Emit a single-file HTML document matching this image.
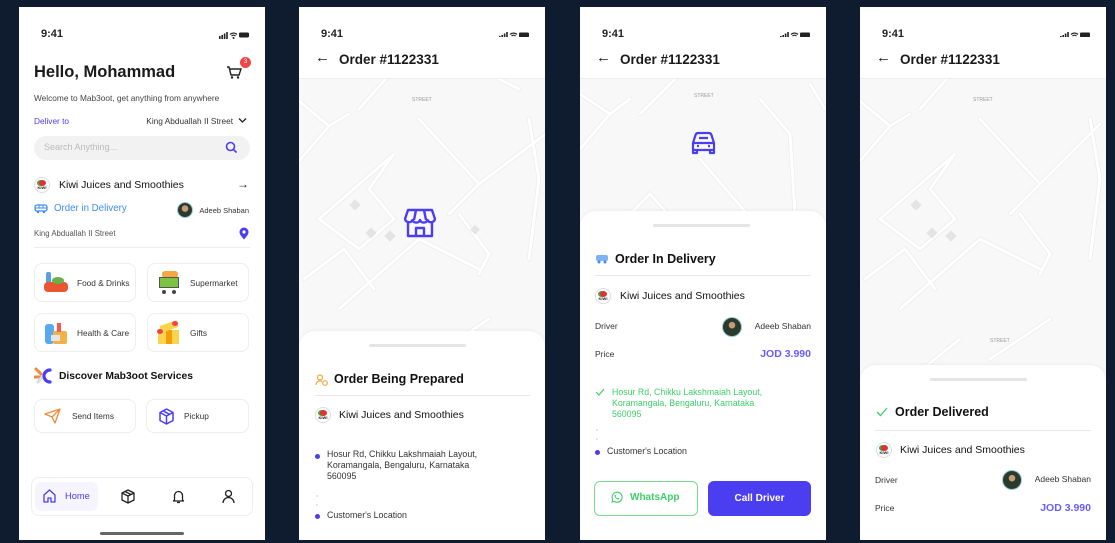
<!DOCTYPE html>
<html><head><meta charset="utf-8">
<style>
*{margin:0;padding:0;box-sizing:border-box}
body{width:1115px;height:543px;background:#0f1c2f;font-family:"Liberation Sans",sans-serif;color:#1a1a1a;position:relative;overflow:hidden}
.ph{position:absolute;top:7px;width:246px;height:533px;background:#fff;overflow:hidden}
.a{position:absolute;white-space:nowrap}
.sb{position:absolute;top:21px;left:22px;font-size:11px;font-weight:bold;color:#222}
.si{position:absolute;top:24px;right:16px;width:30px;height:8px}
.hdr{position:absolute;top:30px;left:0;width:246px;height:42px;border-bottom:1px solid #eee;background:#fff}
.hdr span{position:absolute;left:40px;top:15px;font-size:13.5px;font-weight:bold}
.hdr b{position:absolute;left:16px;top:12px;font-size:15px}
.map{position:absolute;top:72px;left:0;width:246px;height:300px;background:#f8f8f8}
.sheet{position:absolute;left:0;width:246px;bottom:0;background:#fff;border-radius:16px 16px 0 0;box-shadow:0 -1px 3px rgba(0,0,0,.05)}
.handle{position:absolute;left:73px;top:13px;width:97px;height:3px;background:#e5e5e5;border-radius:2px}
.card{position:absolute;border:1px solid #eee;border-radius:8px;background:#fff}
.card span{position:absolute;font-size:8.3px;color:#333;top:14px}
.logo{position:absolute;width:16px;height:16px;border-radius:50%;border:1px solid #ddd;background:#fff;font-size:4px;text-align:center;line-height:20px;font-weight:bold;color:#222}
.logo:before{content:"";position:absolute;left:4px;top:2px;width:7px;height:6px;background:#d33;border-radius:50%;box-shadow:-2px 0 0 #4a4}
.av{position:absolute;width:16px;height:16px;border-radius:50%;background:radial-gradient(circle at 50% 40%,#c99a7a 0 3px,#2b3b2b 3.5px 100%);border:1px solid #9cd}
.dot{position:absolute;width:5px;height:5px;border-radius:50%;background:#4b3df0}
.sm{position:absolute;width:2px;height:2px;border-radius:50%;background:#ddd}
.kw{font-size:10.5px;color:#111}
.lb{font-size:8.5px;color:#333}
.ad{font-size:8.8px;line-height:10.8px;color:#333}
.tt{font-size:12.5px;font-weight:bold;color:#111}
.pr{font-size:10.5px;font-weight:bold;color:#6a5cff}
</style></head><body>

<!-- PHONE 1 -->
<div class="ph" style="left:19px">
 <div class="sb">9:41</div>
 <svg class="si" viewBox="0 0 30 8"><rect x="0" y="5" width="1.6" height="3" fill="#222"/><rect x="2.4" y="4" width="1.6" height="4" fill="#222"/><rect x="4.8" y="2.5" width="1.6" height="5.5" fill="#222"/><rect x="7.2" y="1" width="1.6" height="7" fill="#222"/><path d="M11 3.5a5 5 0 0 1 7 0M12.5 5a3 3 0 0 1 4 0" stroke="#222" stroke-width="1.2" fill="none"/><circle cx="14.5" cy="7" r="1" fill="#222"/><rect x="20" y="1.5" width="10" height="5" rx="1.2" fill="#222"/></svg>
 <div class="a" style="left:15px;top:56px;font-size:16.5px;font-weight:bold">Hello, Mohammad</div>
 <svg class="a" style="left:207px;top:58px" width="16" height="15" viewBox="0 0 16 15"><path d="M1 2h2l2 8h8l2-6H4" stroke="#222" stroke-width="1.4" fill="none"/><circle cx="6" cy="12.5" r="1.2" fill="#222"/><circle cx="12" cy="12.5" r="1.2" fill="#222"/></svg>
 <div class="a" style="left:221px;top:50px;width:11px;height:11px;border-radius:50%;background:#f04545;color:#fff;font-size:6px;text-align:center;line-height:11px">3</div>
 <div class="a" style="left:15px;top:86px;font-size:8.3px;color:#444">Welcome to Mab3oot, get anything from anywhere</div>
 <div class="a" style="left:15px;top:109px;font-size:8.3px;color:#4b3df0">Deliver to</div>
 <div class="a" style="right:32px;top:109px;font-size:8.3px;color:#333">King Abduallah II Street</div>
 <svg class="a" style="left:219px;top:110px" width="9" height="7" viewBox="0 0 9 7"><path d="M1 1.5l3.5 3.5 3.5-3.5" stroke="#222" stroke-width="1.3" fill="none"/></svg>
 <div class="a" style="left:15px;top:129px;width:216px;height:24px;border-radius:12px;background:#f2f2f2"></div>
 <div class="a" style="left:25px;top:135px;font-size:9px;color:#bbb">Search Anything...</div>
 <svg class="a" style="left:206px;top:134px" width="13" height="13" viewBox="0 0 13 13"><circle cx="5.5" cy="5.5" r="4" stroke="#4b3df0" stroke-width="1.6" fill="none"/><path d="M8.5 8.5l3 3" stroke="#4b3df0" stroke-width="1.6"/></svg>
 <div class="logo" style="left:15px;top:170px">KIWI</div>
 <div class="a kw" style="left:40px;top:172px">Kiwi Juices and Smoothies</div>
 <div class="a" style="left:218px;top:170px;font-size:12px">→</div>
 <svg class="a" style="left:15px;top:197px" width="14" height="10" viewBox="0 0 14 10"><rect x="1" y="1" width="12" height="6" rx="2" stroke="#3d8ef0" stroke-width="1.3" fill="none"/><path d="M1 4h12M5 1v3M9 1v3" stroke="#3d8ef0" stroke-width="1"/><circle cx="4" cy="8" r="1.2" fill="#3d8ef0"/><circle cx="10" cy="8" r="1.2" fill="#3d8ef0"/></svg>
 <div class="a" style="left:35px;top:196px;font-size:9.7px;color:#3d8ef0">Order in Delivery</div>
 <div class="av" style="left:158px;top:195px"></div>
 <div class="a" style="right:16px;top:199px;font-size:7.5px;color:#333">Adeeb Shaban</div>
 <div class="a" style="left:15px;top:222px;font-size:7.8px;color:#555">King Abduallah II Street</div>
 <svg class="a" style="left:220px;top:220px" width="10" height="13" viewBox="0 0 10 13"><path d="M5 12.5C2 9 .5 7 .5 5a4.5 4.5 0 0 1 9 0c0 2-1.5 4-4.5 7.5z" fill="#4b3df0"/><circle cx="5" cy="5" r="1.6" fill="#fff"/></svg>
 <div class="a" style="left:15px;top:240px;width:216px;height:1px;background:#eee"></div>

 <div class="card" style="left:15px;top:256px;width:102px;height:39px"><span style="left:42px">Food &amp; Drinks</span>
  <div class="a" style="left:9px;top:8px;width:24px;height:22px"><div class="a" style="left:2px;top:0;width:5px;height:14px;background:#5aa0e0;border-radius:2px"></div><div class="a" style="left:0;top:10px;width:24px;height:10px;background:#e9552f;border-radius:4px"></div><div class="a" style="left:8px;top:5px;width:12px;height:7px;background:#6ab04c;border-radius:50%"></div></div></div>
 <div class="card" style="left:128px;top:256px;width:102px;height:39px"><span style="left:42px">Supermarket</span>
  <div class="a" style="left:9px;top:7px;width:24px;height:24px"><div class="a" style="left:5px;top:0;width:16px;height:7px;background:#f5a742;border-radius:3px"></div><div class="a" style="left:2px;top:6px;width:20px;height:11px;background:#7cc243;border:1px solid #555"></div><div class="a" style="left:5px;top:19px;width:4px;height:4px;border-radius:50%;background:#444"></div><div class="a" style="left:15px;top:19px;width:4px;height:4px;border-radius:50%;background:#444"></div></div></div>
 <div class="card" style="left:15px;top:306px;width:102px;height:39px"><span style="left:42px">Health &amp; Care</span>
  <div class="a" style="left:10px;top:7px;width:24px;height:24px"><div class="a" style="left:0;top:3px;width:9px;height:20px;background:#5aa8ee;border-radius:3px"></div><div class="a" style="left:8px;top:10px;width:14px;height:13px;background:#f2b24a;border-radius:2px"></div><div class="a" style="left:12px;top:2px;width:4px;height:9px;background:#f25a5a"></div><div class="a" style="left:6px;top:14px;width:9px;height:6px;background:#e6e6e6"></div></div></div>
 <div class="card" style="left:128px;top:306px;width:102px;height:39px"><span style="left:42px">Gifts</span>
  <div class="a" style="left:9px;top:7px;width:24px;height:24px"><div class="a" style="left:1px;top:9px;width:21px;height:14px;background:#fcd34d"></div><div class="a" style="left:9px;top:9px;width:6px;height:14px;background:#f59e0b"></div><div class="a" style="left:3px;top:2px;width:18px;height:7px;background:#fcd34d;transform:rotate(-18deg)"></div><div class="a" style="left:0;top:8px;width:6px;height:5px;background:#ef4444;border-radius:50%"></div><div class="a" style="left:15px;top:0;width:6px;height:5px;background:#ef4444;border-radius:50%"></div></div></div>

 <svg class="a" style="left:15px;top:360px" width="20" height="18" viewBox="0 0 20 18"><path d="M2 2l5 5M1 10h5" stroke="#f08a3c" stroke-width="3" stroke-linecap="round"/><path d="M16 3a6 6 0 0 0 0 12" stroke="#4b3df0" stroke-width="3.2" fill="none" stroke-linecap="round"/><path d="M7 11l-3 4" stroke="#ddd" stroke-width="3" stroke-linecap="round"/></svg>
 <div class="a" style="left:40px;top:364px;font-size:10.3px;font-weight:bold;color:#111">Discover Mab3oot Services</div>
 <div class="card" style="left:15px;top:392px;width:102px;height:34px"><span style="left:37px;top:11px">Send Items</span>
  <svg class="a" style="left:9px;top:8px" width="17" height="16" viewBox="0 0 17 16"><path d="M1 6L16 1 11 15 8 9zM8 9l8-8" stroke="#f08a3c" stroke-width="1.3" fill="none" stroke-linejoin="round"/></svg></div>
 <div class="card" style="left:127px;top:392px;width:103px;height:34px"><span style="left:37px;top:11px">Pickup</span>
  <svg class="a" style="left:11px;top:8px" width="17" height="17" viewBox="0 0 17 17"><path d="M8.5 1L15 4.5v8L8.5 16 2 12.5v-8zM2 4.5l6.5 3.5L15 4.5M8.5 8v8M5 2.8l6.5 3.5" stroke="#4b3df0" stroke-width="1.5" fill="none" stroke-linejoin="round"/></svg></div>

 <div class="a" style="left:12px;top:470px;width:222px;height:39px;border:1px solid #eee;border-radius:8px"></div>
 <div class="a" style="left:16px;top:475px;width:63px;height:29px;background:#f6f5ff;border-radius:6px"></div>
 <svg class="a" style="left:24px;top:482px" width="13" height="14" viewBox="0 0 13 14"><path d="M1 6l5.5-5L12 6v7H8V9H5v4H1z" stroke="#4b3df0" stroke-width="1.3" fill="none" stroke-linejoin="round"/></svg>
 <div class="a" style="left:46px;top:484px;font-size:9.3px;color:#4b3df0">Home</div>
 <svg class="a" style="left:102px;top:482px" width="14" height="15" viewBox="0 0 14 15"><path d="M7 1l6 3v7l-6 3-6-3V4zM1 4l6 3 6-3M7 7v7M4 2.5l6 3" stroke="#222" stroke-width="1.3" fill="none" stroke-linejoin="round"/></svg>
 <svg class="a" style="left:153px;top:482px" width="13" height="15" viewBox="0 0 13 15"><path d="M2.5 11V6.5a4 4 0 0 1 8 0V11l1 1h-10zM5 13.5h3" stroke="#222" stroke-width="1.3" fill="none" stroke-linejoin="round"/></svg>
 <svg class="a" style="left:203px;top:482px" width="13" height="15" viewBox="0 0 13 15"><circle cx="6.5" cy="4.5" r="3" stroke="#222" stroke-width="1.3" fill="none"/><path d="M1 14a5.5 5.5 0 0 1 11 0" stroke="#222" stroke-width="1.3" fill="none"/></svg>
 <div class="a" style="left:81px;top:525px;width:84px;height:3px;background:#666;border-radius:2px"></div>
</div>

<!-- PHONE 2 -->
<div class="ph" style="left:299px">
 <div class="sb">9:41</div>
 <svg class="si" viewBox="0 0 30 8"><rect x="0" y="5" width="1.6" height="3" fill="#222"/><rect x="2.4" y="4" width="1.6" height="4" fill="#222"/><rect x="4.8" y="2.5" width="1.6" height="5.5" fill="#222"/><rect x="7.2" y="1" width="1.6" height="7" fill="#222"/><path d="M11 3.5a5 5 0 0 1 7 0M12.5 5a3 3 0 0 1 4 0" stroke="#222" stroke-width="1.2" fill="none"/><circle cx="14.5" cy="7" r="1" fill="#222"/><rect x="20" y="1.5" width="10" height="5" rx="1.2" fill="#222"/></svg>
 <div class="map"><svg width="246" height="300" viewBox="0 0 246 300"><g stroke="#ececec" stroke-width="4.5" fill="none" stroke-linecap="round"><path d="M0 22l30 25-30 35M30 47L50 35M60 30l40-45M120 40l60 65 80-60M180 105l-30 30M95 75L70 110 95 140 60 170 20 140zM160 135l30 40-10 20M5 200l40-30 30 40M40 230l80-70 60 30M200 0l20 10M230 40l10 60-10 80M100 260l-50 40M130 280l60-40"/></g><g stroke="#fff" stroke-width="3" fill="none" stroke-linecap="round"><path d="M0 22l30 25-30 35M30 47L50 35M60 30l40-45M120 40l60 65 80-60M180 105l-30 30M95 75L70 110 95 140 60 170 20 140zM160 135l30 40-10 20M5 200l40-30 30 40M40 230l80-70 60 30M200 0l20 10M230 40l10 60-10 80M100 260l-50 40M130 280l60-40"/></g><rect x="52" y="122" width="8" height="8" fill="#e4e4e4" transform="rotate(45 56 126)"/><rect x="68" y="150" width="8" height="8" fill="#e4e4e4" transform="rotate(45 72 154)"/><rect x="87" y="153" width="8" height="8" fill="#e4e4e4" transform="rotate(45 91 157)"/><rect x="173" y="147" width="7" height="7" fill="#e4e4e4" transform="rotate(45 176 150)"/><text x="113" y="22" font-size="5" fill="#999" font-family="Liberation Sans">STREET</text></svg></div>
 <div class="hdr"><b>←</b><span>Order #1122331</span></div>
 <svg class="a" style="left:105px;top:201px" width="32" height="30" viewBox="0 0 32 30"><path d="M4 2h24l3 9a4 4 0 0 1-7.5 1 4 4 0 0 1-7.5 0 4 4 0 0 1-7.5 0A4 4 0 0 1 1 11zM4 14v14h24V14M12 28v-8h8v8M12 2l-2 10M20 2l2 10" stroke="#4b3df0" stroke-width="2.4" fill="none" stroke-linejoin="round"/></svg>
 <div class="sheet" style="top:324px">
  <div class="handle" style="left:70px"></div>
  <svg class="a" style="left:16px;top:43px" width="13" height="12" viewBox="0 0 13 12"><circle cx="5" cy="3.5" r="2.5" stroke="#f5a742" stroke-width="1.2" fill="none"/><path d="M1 11a4 4 0 0 1 6-3.5" stroke="#f5a742" stroke-width="1.2" fill="none"/><circle cx="10" cy="9" r="2.3" stroke="#f5a742" stroke-width="1.2" fill="none"/></svg>
  <div class="a tt" style="left:35px;top:41px">Order Being Prepared</div>
  <div class="a" style="left:16px;top:64px;width:215px;height:1px;background:#e8e8e8"></div>
  <div class="logo" style="left:16px;top:76px">KIWI</div>
  <div class="a kw" style="left:40px;top:78px">Kiwi Juices and Smoothies</div>
  <div class="dot" style="left:16px;top:123px"></div>
  <div class="a ad" style="left:28px;top:118px">Hosur Rd, Chikku Lakshmaiah Layout,<br>Koramangala, Bengaluru, Karnataka<br>560095</div>
  <div class="sm" style="left:17px;top:164px"></div><div class="sm" style="left:17px;top:173px"></div>
  <div class="dot" style="left:16px;top:183px"></div>
  <div class="a ad" style="left:28px;top:179px">Customer's Location</div>
 </div>
</div>

<!-- PHONE 3 -->
<div class="ph" style="left:580px">
 <div class="sb">9:41</div>
 <svg class="si" viewBox="0 0 30 8"><rect x="0" y="5" width="1.6" height="3" fill="#222"/><rect x="2.4" y="4" width="1.6" height="4" fill="#222"/><rect x="4.8" y="2.5" width="1.6" height="5.5" fill="#222"/><rect x="7.2" y="1" width="1.6" height="7" fill="#222"/><path d="M11 3.5a5 5 0 0 1 7 0M12.5 5a3 3 0 0 1 4 0" stroke="#222" stroke-width="1.2" fill="none"/><circle cx="14.5" cy="7" r="1" fill="#222"/><rect x="20" y="1.5" width="10" height="5" rx="1.2" fill="#222"/></svg>
 <div class="map"><svg width="246" height="300" viewBox="0 0 246 300"><g stroke="#ececec" stroke-width="4.5" fill="none" stroke-linecap="round"><path d="M0 15l30 20-30 35M30 35L50 20M60 35l40-40M180 20l30 35 5 80M120 80l60 70M180 150l-30 30M70 115l-35 35 35 40 40-30zM5 200l40-30M230 5l15 25"/></g><g stroke="#fff" stroke-width="3" fill="none" stroke-linecap="round"><path d="M0 15l30 20-30 35M30 35L50 20M60 35l40-40M180 20l30 35 5 80M120 80l60 70M180 150l-30 30M70 115l-35 35 35 40 40-30zM5 200l40-30M230 5l15 25"/></g><rect x="98" y="164" width="7" height="7" fill="#e4e4e4" transform="rotate(45 101 167)"/><text x="114" y="18" font-size="5" fill="#999" font-family="Liberation Sans">STREET</text></svg></div>
 <div class="hdr"><b>←</b><span>Order #1122331</span></div>
 <svg class="a" style="left:110px;top:124px" width="27" height="24" viewBox="0 0 27 24"><path d="M3 12l2.5-8a3 3 0 0 1 3-2h10a3 3 0 0 1 3 2l2.5 8v7H3zM3 19v3h4v-3M20 19v3h4v-3M3 12h21M9 7h9M7 15h2M18 15h2" stroke="#4b3df0" stroke-width="2.2" fill="none" stroke-linejoin="round"/></svg>
 <div class="sheet" style="top:204px">
  <div class="handle"></div>
  <svg class="a" style="left:15px;top:43px" width="14" height="10" viewBox="0 0 14 10"><rect x="1" y="1" width="12" height="6" rx="2" fill="#7fb2f5"/><circle cx="4" cy="8" r="1.5" fill="#3d8ef0"/><circle cx="10" cy="8" r="1.5" fill="#3d8ef0"/></svg>
  <div class="a tt" style="left:35px;top:41px">Order In Delivery</div>
  <div class="a" style="left:15px;top:64px;width:216px;height:1px;background:#e8e8e8"></div>
  <div class="logo" style="left:15px;top:77px">KIWI</div>
  <div class="a kw" style="left:40px;top:79px">Kiwi Juices and Smoothies</div>
  <div class="a lb" style="left:15px;top:110px">Driver</div>
  <div class="av" style="left:142px;top:106px;width:20px;height:20px"></div>
  <div class="a lb" style="right:15px;top:110px">Adeeb Shaban</div>
  <div class="a lb" style="left:15px;top:138px">Price</div>
  <div class="a pr" style="right:15px;top:137px">JOD 3.990</div>
  <svg class="a" style="left:15px;top:177px" width="10" height="8" viewBox="0 0 10 8"><path d="M1 4l3 3 5-6" stroke="#3fcf6a" stroke-width="1.2" fill="none"/></svg>
  <div class="a ad" style="left:32px;top:176px;color:#3fcf6a">Hosur Rd, Chikku Lakshmaiah Layout,<br>Koramangala, Bengaluru, Karnataka<br>560095</div>
  <div class="sm" style="left:16px;top:218px"></div><div class="sm" style="left:16px;top:227px"></div>
  <div class="dot" style="left:15px;top:239px"></div>
  <div class="a ad" style="left:27px;top:235px">Customer's Location</div>
  <div class="a" style="left:14px;top:270px;width:104px;height:35px;border:1px solid #7ad88f;border-radius:6px"></div>
  <svg class="a" style="left:30px;top:280px" width="13" height="13" viewBox="0 0 13 13"><path d="M2 11l.7-2.4A5 5 0 1 1 4.5 10.5z" stroke="#3fcf6a" stroke-width="1.1" fill="none"/><path d="M4.5 4.5c0 2 2 4 4 4l.8-1-1.3-.7-.6.6c-.8-.3-1.5-1-1.8-1.8l.6-.6-.7-1.3z" fill="#3fcf6a"/></svg>
  <div class="a" style="left:50px;top:281px;font-size:10px;font-weight:bold;color:#3fcf6a">WhatsApp</div>
  <div class="a" style="left:128px;top:270px;width:103px;height:35px;background:#4b3df0;border-radius:6px;color:#fff;font-size:10px;font-weight:bold;text-align:center;line-height:35px">Call Driver</div>
 </div>
</div>

<!-- PHONE 4 -->
<div class="ph" style="left:860px">
 <div class="sb">9:41</div>
 <svg class="si" viewBox="0 0 30 8"><rect x="0" y="5" width="1.6" height="3" fill="#222"/><rect x="2.4" y="4" width="1.6" height="4" fill="#222"/><rect x="4.8" y="2.5" width="1.6" height="5.5" fill="#222"/><rect x="7.2" y="1" width="1.6" height="7" fill="#222"/><path d="M11 3.5a5 5 0 0 1 7 0M12.5 5a3 3 0 0 1 4 0" stroke="#222" stroke-width="1.2" fill="none"/><circle cx="14.5" cy="7" r="1" fill="#222"/><rect x="20" y="1.5" width="10" height="5" rx="1.2" fill="#222"/></svg>
 <div class="map"><svg width="246" height="300" viewBox="0 0 246 300"><g stroke="#ececec" stroke-width="4.5" fill="none" stroke-linecap="round"><path d="M0 22l30 25-30 35M30 47L50 35M60 30l40-45M120 40l60 65 60-60M180 105l-30 30M95 75L70 110 95 140 60 170 20 140zM160 135l30 40-10 20M5 200l40-30 30 40M40 230l80-70 60 30M230 40l10 60-10 80M100 260l-50 40M130 280l60-40"/></g><g stroke="#fff" stroke-width="3" fill="none" stroke-linecap="round"><path d="M0 22l30 25-30 35M30 47L50 35M60 30l40-45M120 40l60 65 60-60M180 105l-30 30M95 75L70 110 95 140 60 170 20 140zM160 135l30 40-10 20M5 200l40-30 30 40M40 230l80-70 60 30M230 40l10 60-10 80M100 260l-50 40M130 280l60-40"/></g><rect x="52" y="122" width="8" height="8" fill="#e4e4e4" transform="rotate(45 56 126)"/><rect x="68" y="150" width="8" height="8" fill="#e4e4e4" transform="rotate(45 72 154)"/><rect x="87" y="153" width="8" height="8" fill="#e4e4e4" transform="rotate(45 91 157)"/><text x="113" y="22" font-size="5" fill="#999" font-family="Liberation Sans">STREET</text><text x="130" y="263" font-size="5" fill="#999" font-family="Liberation Sans">STREET</text></svg></div>
 <div class="hdr"><b>←</b><span>Order #1122331</span></div>
 <div class="sheet" style="top:358px">
  <div class="handle" style="left:70px"></div>
  <svg class="a" style="left:16px;top:42px" width="12" height="10" viewBox="0 0 12 10"><path d="M1 5l3.5 3.5L11 1" stroke="#3fcf6a" stroke-width="1.3" fill="none"/></svg>
  <div class="a tt" style="left:35px;top:40px">Order Delivered</div>
  <div class="a" style="left:15px;top:65px;width:216px;height:1px;background:#e8e8e8"></div>
  <div class="logo" style="left:16px;top:77px">KIWI</div>
  <div class="a kw" style="left:40px;top:79px">Kiwi Juices and Smoothies</div>
  <div class="a lb" style="left:15px;top:110px">Driver</div>
  <div class="av" style="left:142px;top:105px;width:20px;height:20px"></div>
  <div class="a lb" style="right:15px;top:109px">Adeeb Shaban</div>
  <div class="a lb" style="left:15px;top:138px">Price</div>
  <div class="a pr" style="right:15px;top:137px">JOD 3.990</div>
 </div>
</div>
</body></html>
